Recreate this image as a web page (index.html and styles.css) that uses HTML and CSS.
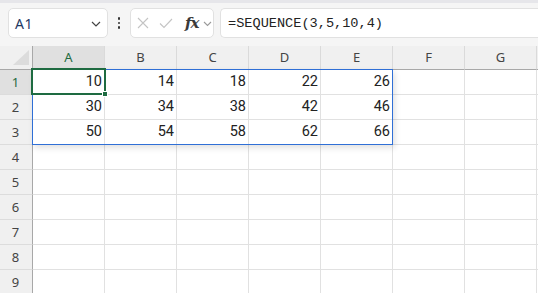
FILE: index.html
```html
<!DOCTYPE html>
<html>
<head>
<meta charset="utf-8">
<link rel="stylesheet" href="styles.css">
</head>
<body>
<div class="topband"></div>
<div class="toolbar">
  <div class="namebox">
    <span class="nameref">A1</span>
    <svg class="chev" width="10" height="6" viewBox="0 0 10 6"><path d="M1 1 L5 5 L9 1" fill="none" stroke="#444" stroke-width="1.2"/></svg>
  </div>
  <div class="dots"><i></i><i></i><i></i></div>
  <div class="fbtns">
    <svg class="ic-x" width="12" height="12" viewBox="0 0 12 12"><path d="M1 1 L11 11 M11 1 L1 11" stroke="#c4c4c4" stroke-width="1.1" fill="none"/></svg>
    <svg class="ic-check" width="14" height="11" viewBox="0 0 14 11"><path d="M1 5.5 L5 9.5 L13 1" stroke="#c4c4c4" stroke-width="1.1" fill="none"/></svg>
    <span class="fx">fx</span>
    <svg class="chev2" width="9" height="6" viewBox="0 0 9 6"><path d="M1 1 L4.5 4.5 L8 1" fill="none" stroke="#9a9a9a" stroke-width="1.1"/></svg>
  </div>
  <div class="fbar">=SEQUENCE(3,5,10,4)</div>
</div>
<div class="grid">
  <div class="cell corner"><span class="tri"></span></div>
  <div class="cell colhead sel">A</div>
  <div class="cell colhead">B</div>
  <div class="cell colhead">C</div>
  <div class="cell colhead">D</div>
  <div class="cell colhead">E</div>
  <div class="cell colhead">F</div>
  <div class="cell colhead">G</div>
  <div class="cell colhead last"></div>

  <div class="cell rowhead sel">1</div>
  <div class="cell num">10</div><div class="cell num">14</div><div class="cell num">18</div><div class="cell num">22</div><div class="cell num">26</div><div class="cell"></div><div class="cell"></div><div class="cell last"></div>

  <div class="cell rowhead">2</div>
  <div class="cell num">30</div><div class="cell num">34</div><div class="cell num">38</div><div class="cell num">42</div><div class="cell num">46</div><div class="cell"></div><div class="cell"></div><div class="cell last"></div>

  <div class="cell rowhead">3</div>
  <div class="cell num">50</div><div class="cell num">54</div><div class="cell num">58</div><div class="cell num">62</div><div class="cell num">66</div><div class="cell"></div><div class="cell"></div><div class="cell last"></div>

  <div class="cell rowhead">4</div>
  <div class="cell"></div><div class="cell"></div><div class="cell"></div><div class="cell"></div><div class="cell"></div><div class="cell"></div><div class="cell"></div><div class="cell last"></div>

  <div class="cell rowhead">5</div>
  <div class="cell"></div><div class="cell"></div><div class="cell"></div><div class="cell"></div><div class="cell"></div><div class="cell"></div><div class="cell"></div><div class="cell last"></div>

  <div class="cell rowhead">6</div>
  <div class="cell"></div><div class="cell"></div><div class="cell"></div><div class="cell"></div><div class="cell"></div><div class="cell"></div><div class="cell"></div><div class="cell last"></div>

  <div class="cell rowhead">7</div>
  <div class="cell"></div><div class="cell"></div><div class="cell"></div><div class="cell"></div><div class="cell"></div><div class="cell"></div><div class="cell"></div><div class="cell last"></div>

  <div class="cell rowhead">8</div>
  <div class="cell"></div><div class="cell"></div><div class="cell"></div><div class="cell"></div><div class="cell"></div><div class="cell"></div><div class="cell"></div><div class="cell last"></div>

  <div class="cell rowhead">9</div>
  <div class="cell"></div><div class="cell"></div><div class="cell"></div><div class="cell"></div><div class="cell"></div><div class="cell"></div><div class="cell"></div><div class="cell last"></div>

  <div class="spill"></div>
  <div class="active"><span class="handle"></span></div>
</div>
</body>
</html>
```
FILE: styles.css
```css
* { box-sizing: border-box; }
html, body { margin: 0; padding: 0; }
body {
  width: 538px;
  height: 293px;
  overflow: hidden;
  background: #f5f5f5;
  font-family: "Noto Sans", "Liberation Sans", sans-serif;
}
.topband { height: 3px; background: #e6e6ea; }
.toolbar {
  display: flex;
  align-items: center;
  height: 43px;
  padding: 5px 0 8px 8px;
}
.namebox {
  width: 100px;
  height: 30px;
  background: #fff;
  border: 1px solid #e1e1e1;
  border-radius: 5px;
  display: flex;
  align-items: center;
  justify-content: space-between;
  padding: 0 6px 0 6px;
}
.nameref { font-size: 14px; color: #1f3864; letter-spacing: 0.5px; }
.chev { margin-top: 1px; }
.dots {
  width: 22px;
  display: flex;
  flex-direction: column;
  align-items: center;
  gap: 2px;
}
.dots i { display: block; width: 2.5px; height: 2.5px; border-radius: 50%; background: #333; }
.fbtns {
  width: 84px;
  height: 30px;
  background: #fff;
  border: 1px solid #e1e1e1;
  border-radius: 5px;
  display: flex;
  align-items: center;
  padding-left: 6px;
}
.ic-x { margin-left: 0; }
.ic-check { margin-left: 10px; }
.fx {
  margin-left: 12px;
  font-family: "DejaVu Serif", "Liberation Serif", serif;
  font-style: italic;
  font-weight: bold;
  font-size: 15px;
  color: #3a3a3a;
  letter-spacing: -1px;
  line-height: 1;
}
.chev2 { margin-left: 5px; margin-top: 2px; }
.fbar {
  flex: 1;
  margin-left: 6px;
  height: 30px;
  background: #fff;
  border: 1px solid #e1e1e1;
  border-right: none;
  border-radius: 5px 0 0 5px;
  display: flex;
  align-items: center;
  padding-left: 7px;
  font-family: "Liberation Mono", "DejaVu Sans Mono", monospace;
  font-size: 13.6px;
  color: #222;
}
.grid {
  position: relative;
  display: grid;
  grid-template-columns: 33px repeat(7, 72px) 1fr;
  grid-template-rows: 24px;
  grid-auto-rows: 25px;
  background: #fff;
}
.cell {
  border-right: 1px solid #e1e1e1;
  border-bottom: 1px solid #e1e1e1;
  background: #fff;
}
.cell.last { border-right: none; }
.colhead {
  background: #f0f0f0;
  border-bottom: 1px solid #a8a8a8;
  border-right: 1px solid #dadada;
  font-size: 13px;
  color: #444;
  display: flex;
  align-items: center;
  justify-content: center;
  padding-bottom: 2px;
}
.corner {
  background: #f0f0f0;
  border-bottom: 1px solid #a8a8a8;
  border-right: 1px solid #a8a8a8;
  position: relative;
}
.tri {
  position: absolute;
  right: 3px;
  bottom: 4px;
  width: 16px;
  height: 15px;
  background: #dcdcdc;
  clip-path: polygon(100% 0, 100% 100%, 0 100%);
}
.rowhead {
  background: #f0f0f0;
  border-right: 1px solid #a8a8a8;
  border-bottom: 1px solid #dcdcdc;
  font-size: 13px;
  color: #444;
  display: flex;
  align-items: center;
  justify-content: center;
  padding-right: 1px;
}
.sel { background: #e0e0e0; color: #1e6b41; }
.num {
  font-family: "Roboto", "Liberation Sans", sans-serif;
  font-size: 14.5px;
  color: #222;
  text-align: right;
  padding-right: 2px;
  line-height: 24px;
}
.spill {
  position: absolute;
  left: 32px;
  top: 23px;
  width: 361px;
  height: 76px;
  border: 1px solid #2f6fd6;
  box-shadow: 2px 3px 6px rgba(0,0,0,0.12);
  pointer-events: none;
}
.active {
  position: absolute;
  left: 31px;
  top: 22px;
  width: 75px;
  height: 27px;
  border: 2px solid #1e6b41;
}
.handle {
  position: absolute;
  right: -4px;
  bottom: -4px;
  width: 6px;
  height: 6px;
  background: #1e6b41;
  border: 1px solid #fff;
}
```
